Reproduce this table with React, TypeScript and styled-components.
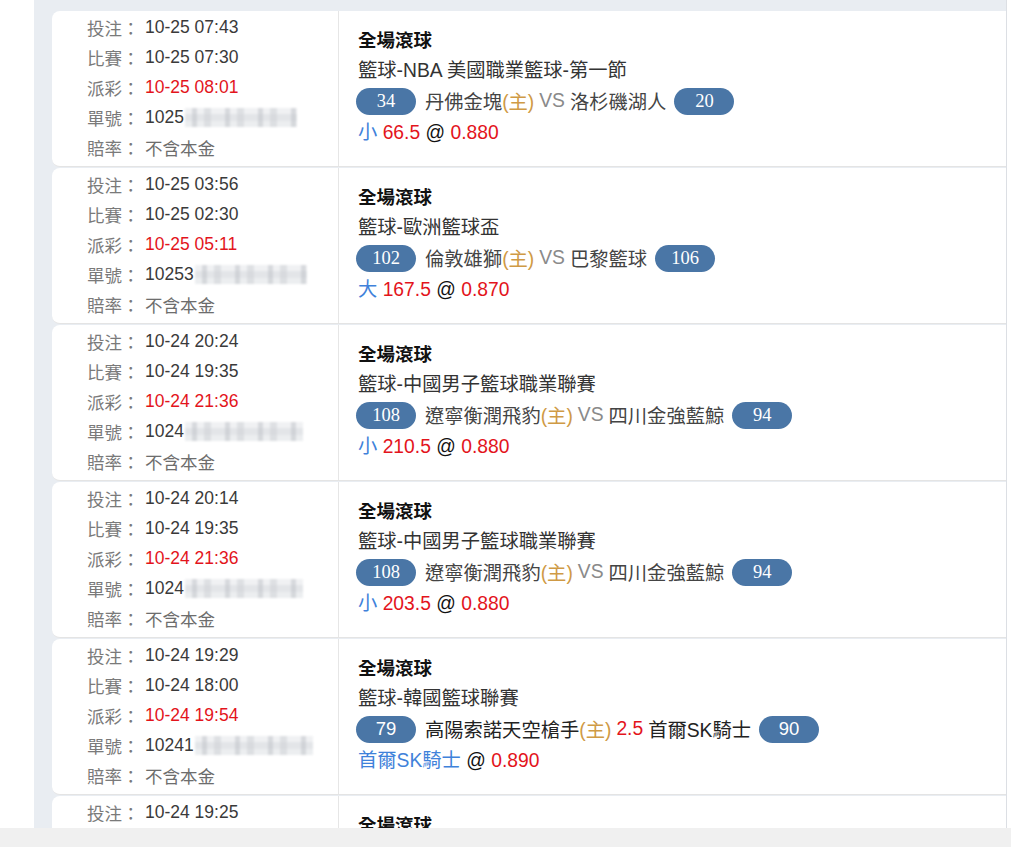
import styled, { createGlobalStyle } from "styled-components";

const GlobalStyle = createGlobalStyle`
  html, body {
    margin: 0;
    padding: 0;
    background: #fff;
    font-family: "Liberation Sans", "Noto Sans CJK TC", Arial, sans-serif;
  }
`;

const Page = styled.div`
  height: 847px;
  display: flex;
  flex-direction: column;
  overflow: hidden;
`;

const Main = styled.div`
  flex: 1;
  min-height: 0;
  overflow: hidden;
  display: flex;
  padding-left: 34px;
`;

const Panel = styled.div`
  width: 954px;
  background: #e9edf2;
  padding: 11px 0 0 18px;
  border-right: 1px solid #dcdfe4;
`;

const Card = styled.div`
  display: flex;
  background: #fff;
  min-height: 155px;
  border-radius: 8px 0 0 8px;
  border-bottom: 1px solid #e4e4e4;
  margin-bottom: 1px;
`;

const InfoCell = styled.div`
  width: 251px;
  flex-shrink: 0;
  padding: 1px 0 3px 35px;
  border-right: 1px solid #e6e6e6;
  font-size: 17.5px;
`;

const InfoLine = styled.div`
  display: flex;
  align-items: center;
  height: 30px;
  white-space: nowrap;
`;

const Label = styled.span`
  width: 58px;
  color: #7a7a7a;
`;

const Value = styled.span<{ $tone?: "red" | "muted" }>`
  color: ${(p) => (p.$tone === "red" ? "#e3141c" : p.$tone === "muted" ? "#6d6d6d" : "#3a3a3a")};
`;

// pixelated (mosaic) cover over the hidden part of the order number
const Blur = styled.span`
  display: inline-block;
  vertical-align: middle;
  height: 19px;
  margin-left: 1px;
  background:
    repeating-linear-gradient(90deg, rgba(255,255,255,0) 0 7px, rgba(185,189,195,0.45) 7px 12px, rgba(255,255,255,0) 12px 19px, rgba(205,208,212,0.5) 19px 26px, rgba(255,255,255,0) 26px 33px),
    linear-gradient(180deg, #f0f1f3 0 30%, #e3e5e8 30% 70%, #eceef0 70% 100%);
  filter: blur(0.8px);
`;

const BetCell = styled.div`
  flex: 1;
  display: flex;
  flex-direction: column;
  justify-content: center;
  padding: 0 0 3px 19px;
  font-size: 19.3px;
  color: #333;
`;

const Title = styled.div`
  font-weight: bold;
  color: #111;
  font-size: 18.5px;
  line-height: 30px;
`;

const League = styled.div`
  line-height: 30px;
  color: #333;
`;

const TeamsLine = styled.div`
  display: flex;
  align-items: center;
  height: 31px;
  white-space: nowrap;
`;

const Badge = styled.span<{ $serif?: boolean }>`
  display: inline-flex;
  align-items: center;
  justify-content: center;
  width: 60px;
  height: 27px;
  border-radius: 14px;
  background: #4a76a6;
  color: #fff;
  font-size: 18.5px;
  font-family: ${(p) => (p.$serif ? `"Liberation Serif", "Times New Roman", serif` : `"Liberation Sans", Arial, sans-serif`)};
  margin: 0 9px 0 -2px;
  &:last-child {
    margin: 0 0 0 8px;
  }
`;

const Team = styled.span<{ $dark?: boolean }>`
  color: ${(p) => (p.$dark ? "#222" : "#444")};
`;

const Home = styled.span`
  color: #cf9a45;
`;

const Vs = styled.span`
  color: #8a8a8a;
  margin: 0 5px;
`;

const Handicap = styled.span`
  color: #e3141c;
  margin: 0 5px;
`;

const BetLine = styled.div`
  line-height: 32px;
  white-space: nowrap;
`;

const Pick = styled.span`
  color: #3f82da;
`;

const Red = styled.span`
  color: #e3141c;
`;

const At = styled.span`
  color: #111;
`;

const Footer = styled.div`
  height: 19px;
  flex-shrink: 0;
  background: #f0f0f0;
`;

interface Bet {
  placed: string;
  match: string;
  settled: string;
  orderPrefix: string;
  blurWidth: number;
  league: string;
  homeScore: number;
  home: string;
  away: string;
  awayScore: number;
  handicap?: string;
  serif: boolean;
  pick: string;
  line?: string;
  odds: string;
}

const bets: Bet[] = [
  { placed: "10-25 07:43", match: "10-25 07:30", settled: "10-25 08:01", orderPrefix: "1025", blurWidth: 112, league: "籃球-NBA 美國職業籃球-第一節", homeScore: 34, home: "丹佛金塊", away: "洛杉磯湖人", awayScore: 20, serif: true, pick: "小", line: "66.5", odds: "0.880" },
  { placed: "10-25 03:56", match: "10-25 02:30", settled: "10-25 05:11", orderPrefix: "10253", blurWidth: 112, league: "籃球-歐洲籃球盃", homeScore: 102, home: "倫敦雄獅", away: "巴黎籃球", awayScore: 106, serif: true, pick: "大", line: "167.5", odds: "0.870" },
  { placed: "10-24 20:24", match: "10-24 19:35", settled: "10-24 21:36", orderPrefix: "1024", blurWidth: 118, league: "籃球-中國男子籃球職業聯賽", homeScore: 108, home: "遼寧衡潤飛豹", away: "四川金強藍鯨", awayScore: 94, serif: true, pick: "小", line: "210.5", odds: "0.880" },
  { placed: "10-24 20:14", match: "10-24 19:35", settled: "10-24 21:36", orderPrefix: "1024", blurWidth: 118, league: "籃球-中國男子籃球職業聯賽", homeScore: 108, home: "遼寧衡潤飛豹", away: "四川金強藍鯨", awayScore: 94, serif: true, pick: "小", line: "203.5", odds: "0.880" },
  { placed: "10-24 19:29", match: "10-24 18:00", settled: "10-24 19:54", orderPrefix: "10241", blurWidth: 118, league: "籃球-韓國籃球聯賽", homeScore: 79, home: "高陽索諾天空槍手", away: "首爾SK騎士", awayScore: 90, handicap: "2.5", serif: false, pick: "首爾SK騎士", odds: "0.890" },
  { placed: "10-24 19:25", match: "10-24 18:00", settled: "10-24 19:50", orderPrefix: "1024", blurWidth: 118, league: "籃球-韓國籃球聯賽", homeScore: 79, home: "高陽索諾天空槍手", away: "首爾SK騎士", awayScore: 90, handicap: "2.5", serif: false, pick: "首爾SK騎士", odds: "0.890" },
];

function BetCard({ bet }: { bet: Bet }) {
  return (
    <Card>
      <InfoCell>
        <InfoLine><Label>投注：</Label><Value>{bet.placed}</Value></InfoLine>
        <InfoLine><Label>比賽：</Label><Value>{bet.match}</Value></InfoLine>
        <InfoLine><Label>派彩：</Label><Value $tone="red">{bet.settled}</Value></InfoLine>
        <InfoLine>
          <Label>單號：</Label>
          <Value>{bet.orderPrefix}</Value>
          <Blur style={{ width: bet.blurWidth }} />
        </InfoLine>
        <InfoLine><Label>賠率：</Label><Value $tone="muted">不含本金</Value></InfoLine>
      </InfoCell>
      <BetCell>
        <Title>全場滾球</Title>
        <League>{bet.league}</League>
        <TeamsLine>
          <Badge $serif={bet.serif}>{bet.homeScore}</Badge>
          <Team $dark={!!bet.handicap}>{bet.home}</Team>
          <Home>(主)</Home>
          {bet.handicap ? <Handicap>{bet.handicap}</Handicap> : <Vs>VS</Vs>}
          <Team $dark={!!bet.handicap}>{bet.away}</Team>
          <Badge $serif={bet.serif}>{bet.awayScore}</Badge>
        </TeamsLine>
        <BetLine>
          <Pick>{bet.pick}</Pick>
          {bet.line && <Red> {bet.line}</Red>}
          <At> @ </At>
          <Red>{bet.odds}</Red>
        </BetLine>
      </BetCell>
    </Card>
  );
}

export default function App() {
  return (
    <Page>
      <GlobalStyle />
      <Main>
        <Panel>
          {bets.map((b, i) => (
            <BetCard key={i} bet={b} />
          ))}
        </Panel>
      </Main>
      <Footer />
    </Page>
  );
}
